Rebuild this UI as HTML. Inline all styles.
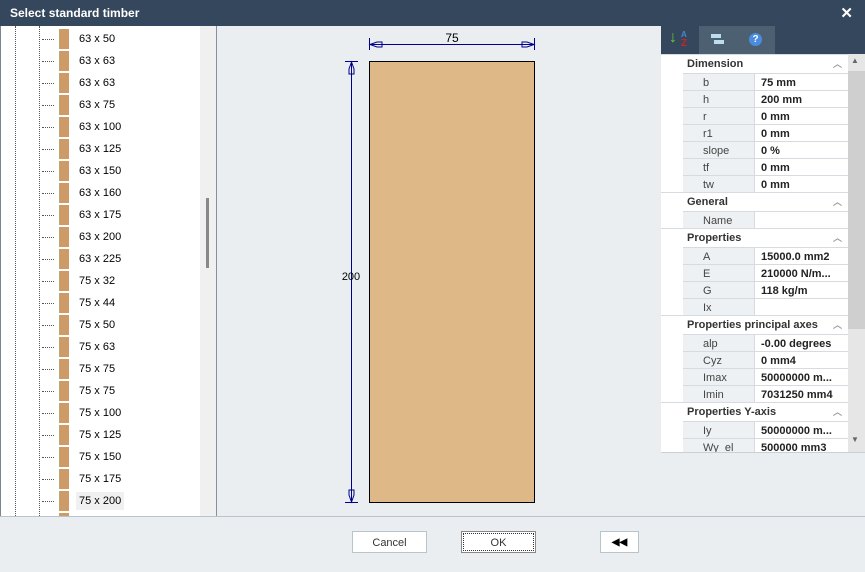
<!DOCTYPE html>
<html><head><meta charset="utf-8"><style>
*{margin:0;padding:0;box-sizing:border-box}
body{width:865px;height:572px;overflow:hidden;background:#eaeef0;font-family:"Liberation Sans",sans-serif;font-size:11px;position:relative}
.a{position:absolute}
#title{left:0;top:0;width:865px;height:26px;background:#34475c;color:#fff;font-weight:bold;font-size:12px;line-height:26px;padding-left:10px}
#tree{left:0;top:26px;width:217px;height:490px;background:#fff;border-left:1px solid #7a8590;border-right:1px solid #8a8fa0;overflow:hidden}
.vl{top:0;width:1px;height:490px;border-left:1px dotted #555}
.row{position:absolute;left:0;height:22px;width:198px}
.row .h{position:absolute;left:41px;top:11px;width:12px;border-top:1px dotted #555}
.row .ic{position:absolute;left:58px;top:1px;width:10px;height:20px;background:#cd9a68;border-left:1px solid #b5aa70}
.row .t{position:absolute;left:75px;top:2px;height:18px;line-height:18px;padding:0 3px;font-size:11px;color:#000}
#sb{left:199px;top:0;width:17px;height:490px;background:#f0f0f0}
#pg{left:661px;top:54px;width:204px;height:398px;background:#fff;overflow:hidden}
.sh{position:absolute;left:0;width:187px;height:17px;line-height:19px;padding-left:26px;font-weight:bold;color:#333;border-top:1px solid #d5dbe0}
.sh i{position:absolute;right:6px;top:0;font-style:normal;color:#999;font-size:9px}
.pr{position:absolute;left:22px;width:165px;height:17px;line-height:18px;border-top:1px solid #d5dbe0}
.pr .k{position:absolute;left:0;top:0;width:72px;height:17px;background:#eef1f3;border-right:1px solid #d5dbe0;padding-left:20px;color:#444}
.pr .v{position:absolute;left:78px;top:0;font-weight:bold;color:#222;white-space:nowrap}
.btn{position:absolute;top:531px;height:22px;background:#fff;border:1px solid #b8c4cc;text-align:center;line-height:22px;color:#333;font-size:11px}
</style></head><body>
<div id="title" class="a">Select standard timber</div>
<div class="a" style="right:12px;top:4px;color:#fff;font-size:15px;font-weight:bold">✕</div>

<div id="tree" class="a">
<div class="a vl" style="left:14px"></div>
<div class="a vl" style="left:38px"></div>
<div id="rows"></div>
<div id="sb" class="a"><div class="a" style="left:6px;top:172px;width:3px;height:70px;background:#888"></div></div>
</div>

<svg class="a" style="left:217px;top:26px" width="444" height="490">
<rect x="152.5" y="35.5" width="165" height="441" fill="#deb887" stroke="#000" stroke-width="1"/>
<g stroke="#00008b" fill="none" stroke-width="1">
<line x1="152.5" y1="12" x2="152.5" y2="24"/><line x1="317.5" y1="12" x2="317.5" y2="24"/>
<line x1="152" y1="18.5" x2="318" y2="18.5"/>
<path d="M153 18.5 L160 16 H165 V21 H160 Z"/><path d="M317 18.5 L310 16 H305 V21 H310 Z"/>
<line x1="128" y1="35.5" x2="141" y2="35.5"/><line x1="128" y1="476.5" x2="141" y2="476.5"/>
<line x1="134.5" y1="35" x2="134.5" y2="477"/>
<path d="M134.5 36 L132 43 V48 H137 V43 Z"/><path d="M134.5 476 L132 469 V464 H137 V469 Z"/>
</g>
<text x="235" y="16" text-anchor="middle" font-size="12" font-family="Liberation Sans" fill="#000">75</text>
<text x="134" y="254" text-anchor="middle" font-size="11" font-family="Liberation Sans" fill="#000">200</text>
</svg>

<div class="a" style="left:661px;top:26px;width:204px;height:28px;background:#34475c"></div>
<div class="a" style="left:699px;top:26px;width:76px;height:28px;background:#4c6072"></div>
<div class="a" style="left:669px;top:29px;color:#6c3;font-weight:bold;font-size:16px">↓</div>
<div class="a" style="left:681px;top:30px;color:#48c;font-size:8px;font-weight:bold">A</div>
<div class="a" style="left:681px;top:38px;color:#c22;font-size:10px;font-weight:bold">Z</div>
<div class="a" style="left:711px;top:34px;width:10px;height:4px;background:#bde"></div>
<div class="a" style="left:714px;top:40px;width:10px;height:4px;background:#bde"></div>
<div class="a" style="left:749px;top:33px;width:13px;height:13px;border-radius:50%;background:#4a8de0;color:#fff;font-size:10px;font-weight:bold;text-align:center;line-height:13px">?</div>

<div id="pg" class="a"><div id="pgc"></div>
<div class="a" style="left:187px;top:0;width:17px;height:398px;background:#e6e6e6"></div>
<div class="a" style="left:187px;top:17px;width:17px;height:258px;background:#cfcfcf"></div>
<div class="a" style="left:190px;top:2px;font-size:8px;color:#666">▲</div>
<div class="a" style="left:190px;top:381px;font-size:8px;color:#666">▼</div>
</div>
<div class="a" style="left:661px;top:452px;width:204px;height:64px;background:#eaeef0;border-top:1px solid #c8d0d6"></div>
<div class="a" style="left:0;top:516px;width:865px;height:1px;background:#b8c4cc"></div>

<div class="btn" style="left:352px;width:75px">Cancel</div>
<div class="btn" style="left:461px;width:75px;border-color:#888;outline:1px dotted #333;outline-offset:-3px">OK</div>
<div class="btn" style="left:600px;width:39px;font-size:10px;color:#000;font-weight:bold">◀◀</div>

<script>
var n=["63 x 50","63 x 63","63 x 63","63 x 75","63 x 100","63 x 125","63 x 150","63 x 160","63 x 175","63 x 200","63 x 225","75 x 32","75 x 44","75 x 50","75 x 63","75 x 75","75 x 75","75 x 100","75 x 125","75 x 150","75 x 175","75 x 200",""];
var h="";n.forEach(function(t,i){h+='<div class="row" style="top:'+(i*22+2)+'px"><div class="h"></div><div class="ic"></div>'+(t?'<div class="t"'+(i==21?' style="background:#f0f0f0"':'')+'>'+t+'</div>':'')+'</div>'});
document.getElementById("rows").innerHTML=h;
var P=[["s","Dimension"],["b","75 mm"],["h","200 mm"],["r","0 mm"],["r1","0 mm"],["slope","0 %"],["tf","0 mm"],["tw","0 mm"],["s","General"],["Name",""],["s","Properties"],["A","15000.0 mm2"],["E","210000 N/m..."],["G","118 kg/m"],["Ix",""],["s","Properties principal axes"],["alp","-0.00 degrees"],["Cyz","0 mm4"],["Imax","50000000 m..."],["Imin","7031250 mm4"],["s","Properties Y-axis"],["Iy","50000000 m..."],["Wy_el","500000 mm3"]];
var g="",y=0;P.forEach(function(p){if(p[0]=="s"){g+='<div class="sh" style="top:'+y+'px">'+p[1]+'<i>︿</i></div>';y+=19}else{g+='<div class="pr" style="top:'+y+'px"><div class="k">'+p[0]+'</div><div class="v">'+p[1]+'</div></div>';y+=17}});
document.getElementById("pgc").innerHTML=g;
</script>
</body></html>
